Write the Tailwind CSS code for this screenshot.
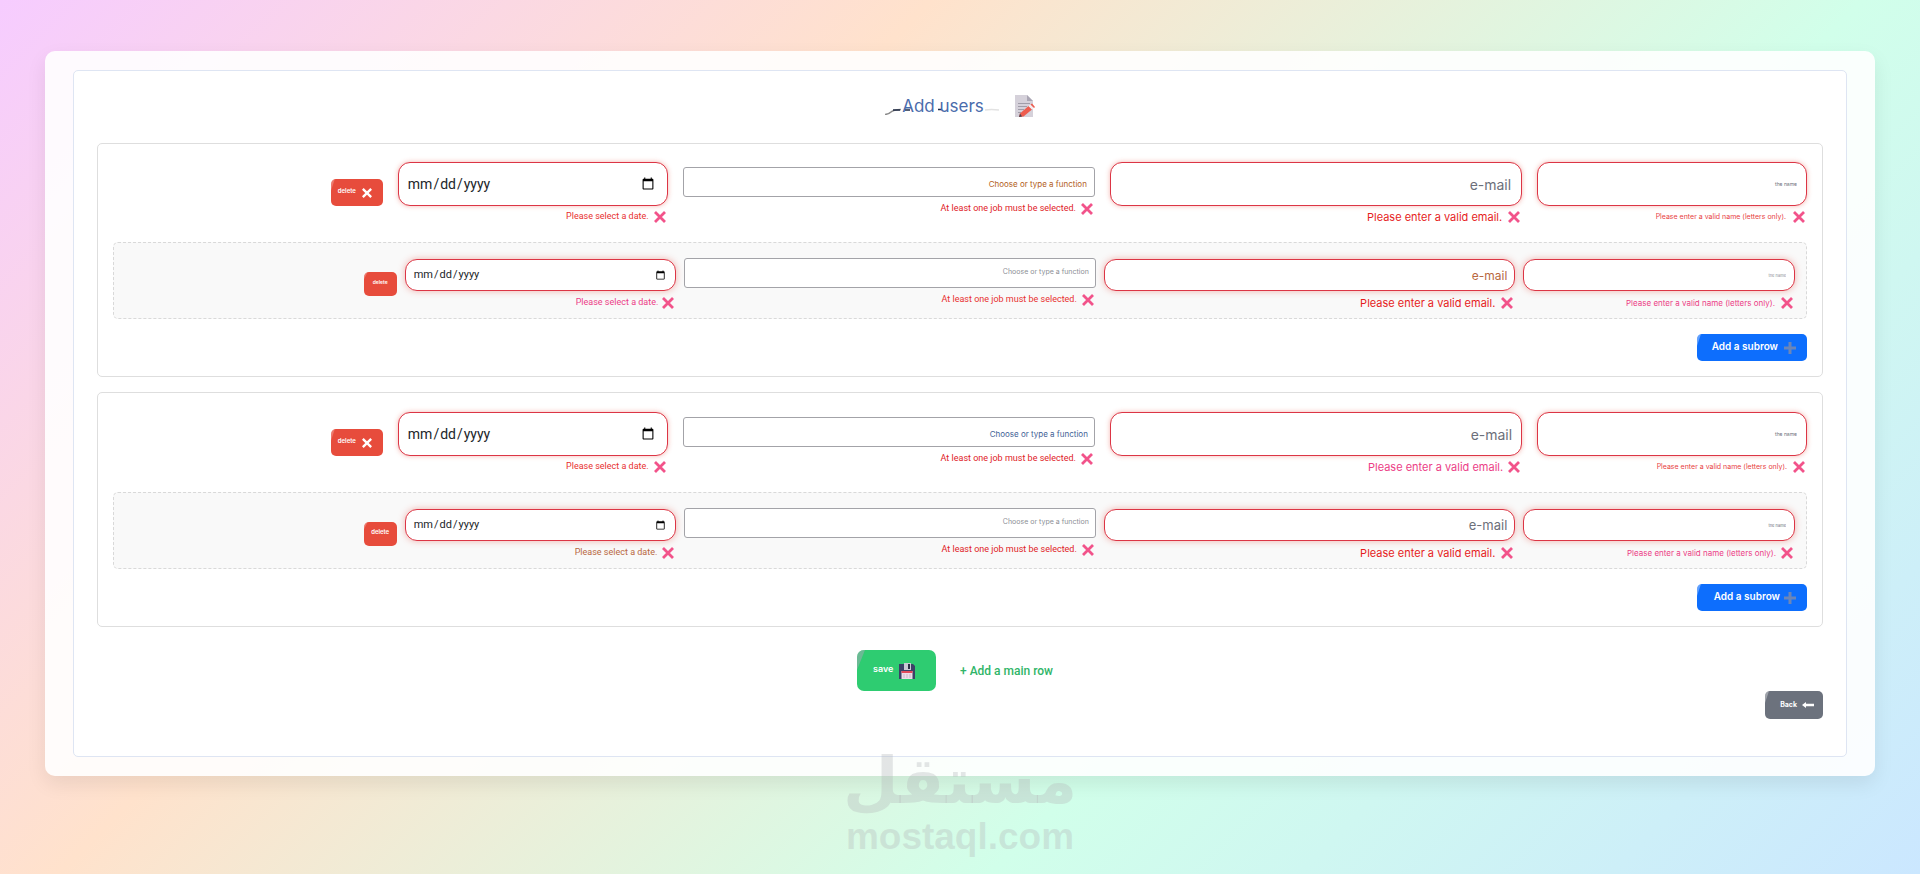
<!DOCTYPE html>
<html lang="en">
<head>
  <meta charset="UTF-8" />
  <meta name="viewport" content="width=device-width, initial-scale=1.0" />
  <title>Add users</title>
  <script src="https://cdn.jsdelivr.net/npm/@tailwindcss/browser@4"></script>
</head>
<body class="relative min-h-screen bg-[linear-gradient(135deg,#f6ccff,#ffe2cc,#d1ffea,#cbe7ff)] px-[45px] pt-[51px] pb-24 font-['Inter',sans-serif]">

  <!-- Shared icons -->
  <svg class="hidden">
    <symbol id="icon-cross" viewBox="0 0 12 12">
      <path d="M1 1 11 11M11 1 1 11" fill="none" stroke="currentColor" stroke-width="2.800" />
    </symbol>
    <symbol id="icon-plus" viewBox="0 0 12 12">
      <path d="M6 0v12M0 6h12" fill="none" stroke="currentColor" stroke-width="3" />
    </symbol>
  </svg>

  <main class="rounded-[10px] bg-white/90 px-7 py-[19px] shadow-[0_8px_20px_rgba(0,0,0,0.08)]">
    <form class="rounded-[5px] border border-[#dee5f3] bg-white px-[23px] pt-[23px] pb-[37px]">

      <header class="mb-[25px] flex h-6 items-center justify-center gap-[31px]">
        <h1 class="relative pl-[17px] text-[17px] leading-6 text-[#4a6cac]">
          <svg class="absolute top-[14px] left-0 h-[7px] w-[116px]" viewBox="0 0 116 7" fill="none">
            <path d="M0 6.500Q4 6 6 4T16 1.500" stroke="#8b8b8b" stroke-width="1.500" />
            <path d="M8 2h7M20 2h5M53 1.500h4" stroke="#1f2b45" stroke-width="1.500" />
            <path d="M100 2q6-1 14 0" stroke="#e2e2e2" stroke-width="1.500" />
          </svg>
          <span class="relative">Add users</span>
        </h1>
        <svg class="h-[22px] w-5" viewBox="0 0 20 22">
          <path d="M0 0h12l6 6v16H0z" fill="#d5d1da" />
          <path d="M12 0v6h6z" fill="#aaa6b4" />
          <path d="M3 8.500h12M3 11.500h9M3 14.500h6M3 17.500h3" stroke="#a19da9" />
          <path d="M5 18.500 13.500 11l3.500 3.500L8.500 21.500 4 22z" fill="#ee5c4e" />
          <path d="m13.500 11 2-1.500 3.500 3.500-2 1.500z" fill="#f4eef2" />
          <path d="m15.500 9.500 1.500-1 3 3.500-1 1z" fill="#ee5c4e" />
          <path d="m5 18.500-1 3.500 3-.5z" fill="#4c4250" />
        </svg>
      </header>

      <!-- Main row 1 -->
      <section class="mb-[15px] rounded-[5px] border border-[#dedede] px-[15px] pt-[18px] pb-[15px]">
        <div class="mb-[18px] grid grid-cols-12 items-start gap-[15px]">
          <div class="col-span-2 flex justify-end pt-[17px]">
            <button type="button" class="relative flex h-[27px] w-[52px] items-center gap-[6px] overflow-hidden rounded-[5px] bg-[#e74c3c] pl-[7px] text-white before:absolute before:top-0 before:left-0 before:h-3 before:w-1 before:bg-white/25 before:[clip-path:polygon(0_0,100%_0,0_100%)]">
              <span class="pb-1 text-[6px] leading-3 font-semibold">delete</span>
              <svg class="size-[10px]"><use href="#icon-cross" /></svg>
            </button>
          </div>
          <div class="col-span-2">
            <input type="date" aria-label="Date" class="block h-11 w-full rounded-xl border border-[#dc3545] bg-white pr-[10px] pl-2 font-['Roboto',sans-serif] text-[14px] text-[#212529] shadow-[0_0_5px_rgba(231,76,60,0.4)]" />
            <p class="mt-1 flex h-[14px] items-center justify-end gap-[5px] pr-[2px] font-['Roboto',sans-serif] text-[9px] text-[#e8302f]">Please select a date. <svg class="size-3 text-[#f2538a]"><use href="#icon-cross" /></svg></p>
          </div>
          <div class="col-span-3 pt-[5px]">
            <input type="text" aria-label="Function" placeholder="Choose or type a function" class="block h-[30px] w-full rounded-[3px] border border-[#a3a3a8] bg-white px-[7px] pt-1 text-right text-[8px] placeholder:text-[#b26022]" />
            <p class="mt-[5px] flex h-[14px] items-center justify-end gap-[5px] pr-[2px] font-['Roboto',sans-serif] text-[9px] text-[#e0221f]">At least one job must be selected. <svg class="size-3 text-[#f2538a]"><use href="#icon-cross" /></svg></p>
          </div>
          <div class="col-span-3">
            <input type="email" aria-label="E-mail" placeholder="e-mail" class="block h-11 w-full rounded-xl border border-[#dc3545] bg-white px-[10px] text-right text-[14px] shadow-[0_0_5px_rgba(231,76,60,0.4)] placeholder:text-[#6c6f7a]" />
            <p class="mt-1 flex h-[14px] items-center justify-end gap-[6px] pr-[2px] text-[11px] text-[#e61c1c]">Please enter a valid email. <svg class="size-3 text-[#f2538a]"><use href="#icon-cross" /></svg></p>
          </div>
          <div class="col-span-2">
            <input type="text" aria-label="Name" placeholder="the name" class="block h-11 w-full rounded-xl border border-[#dc3545] bg-white px-[9px] text-right text-[5px] shadow-[0_0_5px_rgba(231,76,60,0.4)] placeholder:text-[#6c6f7a]" />
            <p class="mt-1 flex h-[14px] items-center justify-end gap-[7px] pr-[2px] text-[7px] text-[#e8403f]">Please enter a valid name (letters only). <svg class="size-3 text-[#f2538a]"><use href="#icon-cross" /></svg></p>
          </div>
        </div>

        <div class="mb-[15px] grid grid-cols-12 items-start gap-2 rounded-[5px] border border-dashed border-[#d9d9d9] bg-[#f9f9f9] px-[11px] pt-[15px] pb-2">
          <div class="col-span-2 flex justify-end pt-[14px]">
            <button type="button" class="relative flex h-6 w-[33px] items-center justify-center overflow-hidden rounded-[5px] bg-[#e74c3c] text-white before:absolute before:top-0 before:left-0 before:h-2 before:w-1 before:bg-white/25 before:[clip-path:polygon(0_0,100%_0,0_100%)]">
              <span class="pb-1 text-[5px] leading-3 font-semibold">delete</span>
            </button>
          </div>
          <div class="col-span-2 pt-px">
            <input type="date" aria-label="Date" class="block h-8 w-full rounded-xl border border-[#dc3545] bg-white px-[7px] font-['Roboto',sans-serif] text-[11px] text-[#212529] shadow-[0_0_7px_rgba(231,76,60,0.4)]" />
            <p class="mt-[5px] flex h-[14px] items-center justify-end gap-1 pr-[2px] font-['Roboto',sans-serif] text-[9px] text-[#ec3d86]">Please select a date. <svg class="size-3 text-[#f2538a]"><use href="#icon-cross" /></svg></p>
          </div>
          <div class="col-span-3">
            <input type="text" aria-label="Function" placeholder="Choose or type a function" class="block h-[30px] w-full rounded-[3px] border border-[#a3a3a8] bg-white px-[6px] pb-1 text-right text-[7px] placeholder:text-[#8c8f96]" />
            <p class="mt-[5px] flex h-[14px] items-center justify-end gap-[5px] pr-[2px] font-['Roboto',sans-serif] text-[9px] text-[#e8302f]">At least one job must be selected. <svg class="size-3 text-[#f2538a]"><use href="#icon-cross" /></svg></p>
          </div>
          <div class="col-span-3 pt-px">
            <input type="email" aria-label="E-mail" placeholder="e-mail" class="block h-8 w-full rounded-xl border border-[#dc3545] bg-white px-[7px] text-right text-[12px] shadow-[0_0_7px_rgba(231,76,60,0.4)] placeholder:text-[#b8683f]" />
            <p class="mt-[5px] flex h-[14px] items-center justify-end gap-[6px] pr-[2px] text-[11px] text-[#e61c1c]">Please enter a valid email. <svg class="size-3 text-[#f2538a]"><use href="#icon-cross" /></svg></p>
          </div>
          <div class="col-span-2 pt-px">
            <input type="text" aria-label="Name" placeholder="the name" class="block h-8 w-full rounded-xl border border-[#dc3545] bg-white px-2 text-right text-[4px] shadow-[0_0_7px_rgba(231,76,60,0.4)] placeholder:text-[#8c8f96]" />
            <p class="mt-[5px] flex h-[14px] items-center justify-end gap-[6px] pr-[2px] text-[8px] text-[#ec3d86]">Please enter a valid name (letters only). <svg class="size-3 text-[#f2538a]"><use href="#icon-cross" /></svg></p>
          </div>
        </div>

        <div class="flex justify-end">
          <button type="button" class="relative flex h-[27px] w-[110px] items-center justify-end gap-[6px] overflow-hidden rounded-[5px] bg-[#0d6efd] pr-[11px] text-white before:absolute before:top-0 before:left-0 before:h-3 before:w-1 before:bg-white/35 before:[clip-path:polygon(0_0,100%_0,0_100%)]">
            <span class="pb-1 text-[10px] leading-3 font-semibold">Add a subrow</span>
            <svg class="size-3 text-[#6c86b8]"><use href="#icon-plus" /></svg>
          </button>
        </div>
      </section>

      <!-- Main row 2 -->
      <section class="mb-[23px] rounded-[5px] border border-[#dedede] px-[15px] pt-[19px] pb-[15px]">
        <div class="mb-[18px] grid grid-cols-12 items-start gap-[15px]">
          <div class="col-span-2 flex justify-end pt-[17px]">
            <button type="button" class="relative flex h-[27px] w-[52px] items-center gap-[6px] overflow-hidden rounded-[5px] bg-[#e74c3c] pl-[7px] text-white before:absolute before:top-0 before:left-0 before:h-3 before:w-1 before:bg-white/25 before:[clip-path:polygon(0_0,100%_0,0_100%)]">
              <span class="pb-1 text-[6px] leading-3 font-semibold">delete</span>
              <svg class="size-[10px]"><use href="#icon-cross" /></svg>
            </button>
          </div>
          <div class="col-span-2">
            <input type="date" aria-label="Date" class="block h-11 w-full rounded-xl border border-[#dc3545] bg-white pr-[10px] pl-2 font-['Roboto',sans-serif] text-[14px] text-[#212529] shadow-[0_0_5px_rgba(231,76,60,0.4)]" />
            <p class="mt-1 flex h-[14px] items-center justify-end gap-[5px] pr-[2px] font-['Roboto',sans-serif] text-[9px] text-[#e8302f]">Please select a date. <svg class="size-3 text-[#f2538a]"><use href="#icon-cross" /></svg></p>
          </div>
          <div class="col-span-3 pt-[5px]">
            <input type="text" aria-label="Function" placeholder="Choose or type a function" class="block h-[30px] w-full rounded-[3px] border border-[#a3a3a8] bg-white px-[6px] pt-1 text-right text-[8px] placeholder:text-[#3f5f96]" />
            <p class="mt-[5px] flex h-[14px] items-center justify-end gap-[5px] pr-[2px] font-['Roboto',sans-serif] text-[9px] text-[#e0221f]">At least one job must be selected. <svg class="size-3 text-[#f2538a]"><use href="#icon-cross" /></svg></p>
          </div>
          <div class="col-span-3">
            <input type="email" aria-label="E-mail" placeholder="e-mail" class="block h-11 w-full rounded-xl border border-[#dc3545] bg-white px-[9px] text-right text-[14px] shadow-[0_0_5px_rgba(231,76,60,0.4)] placeholder:text-[#6c6f7a]" />
            <p class="mt-1 flex h-[14px] items-center justify-end gap-[5px] pr-[2px] text-[11px] text-[#ec3d86]">Please enter a valid email. <svg class="size-3 text-[#f2538a]"><use href="#icon-cross" /></svg></p>
          </div>
          <div class="col-span-2">
            <input type="text" aria-label="Name" placeholder="the name" class="block h-11 w-full rounded-xl border border-[#dc3545] bg-white px-[9px] text-right text-[5px] shadow-[0_0_5px_rgba(231,76,60,0.4)] placeholder:text-[#6c6f7a]" />
            <p class="mt-1 flex h-[14px] items-center justify-end gap-[6px] pr-[2px] text-[7px] text-[#e8403f]">Please enter a valid name (letters only). <svg class="size-3 text-[#f2538a]"><use href="#icon-cross" /></svg></p>
          </div>
        </div>

        <div class="mb-[15px] grid grid-cols-12 items-start gap-2 rounded-[5px] border border-dashed border-[#d9d9d9] bg-[#f9f9f9] px-[11px] pt-[15px] pb-2">
          <div class="col-span-2 flex justify-end pt-[14px]">
            <button type="button" class="relative flex h-6 w-[33px] items-center justify-center overflow-hidden rounded-[5px] bg-[#e74c3c] text-white before:absolute before:top-0 before:left-0 before:h-2 before:w-1 before:bg-white/25 before:[clip-path:polygon(0_0,100%_0,0_100%)]">
              <span class="pb-1 text-[6px] leading-3 font-semibold">delete</span>
            </button>
          </div>
          <div class="col-span-2 pt-px">
            <input type="date" aria-label="Date" class="block h-8 w-full rounded-xl border border-[#dc3545] bg-white px-[7px] font-['Roboto',sans-serif] text-[11px] text-[#212529] shadow-[0_0_7px_rgba(231,76,60,0.4)]" />
            <p class="mt-[5px] flex h-[14px] items-center justify-end gap-[5px] pr-[2px] font-['Roboto',sans-serif] text-[9px] text-[#b8683f]">Please select a date. <svg class="size-3 text-[#f2538a]"><use href="#icon-cross" /></svg></p>
          </div>
          <div class="col-span-3">
            <input type="text" aria-label="Function" placeholder="Choose or type a function" class="block h-[30px] w-full rounded-[3px] border border-[#a3a3a8] bg-white px-[6px] pb-1 text-right text-[7px] placeholder:text-[#8c8f96]" />
            <p class="mt-[5px] flex h-[14px] items-center justify-end gap-[5px] pr-[2px] font-['Roboto',sans-serif] text-[9px] text-[#e0221f]">At least one job must be selected. <svg class="size-3 text-[#f2538a]"><use href="#icon-cross" /></svg></p>
          </div>
          <div class="col-span-3 pt-px">
            <input type="email" aria-label="E-mail" placeholder="e-mail" class="block h-8 w-full rounded-xl border border-[#dc3545] bg-white px-[7px] text-right text-[13px] shadow-[0_0_7px_rgba(231,76,60,0.4)] placeholder:text-[#6c6f7a]" />
            <p class="mt-[5px] flex h-[14px] items-center justify-end gap-[6px] pr-[2px] text-[11px] text-[#e61c1c]">Please enter a valid email. <svg class="size-3 text-[#f2538a]"><use href="#icon-cross" /></svg></p>
          </div>
          <div class="col-span-2 pt-px">
            <input type="text" aria-label="Name" placeholder="the name" class="block h-8 w-full rounded-xl border border-[#dc3545] bg-white px-2 text-right text-[4px] shadow-[0_0_7px_rgba(231,76,60,0.4)] placeholder:text-[#6c6f7a]" />
            <p class="mt-[5px] flex h-[14px] items-center justify-end gap-[5px] pr-[2px] text-[8px] text-[#ec3d86]">Please enter a valid name (letters only). <svg class="size-3 text-[#f2538a]"><use href="#icon-cross" /></svg></p>
          </div>
        </div>

        <div class="flex justify-end">
          <button type="button" class="relative flex h-[27px] w-[110px] items-center justify-end gap-1 overflow-hidden rounded-[5px] bg-[#0d6efd] pr-[11px] text-white before:absolute before:top-0 before:left-0 before:h-3 before:w-1 before:bg-white/35 before:[clip-path:polygon(0_0,100%_0,0_100%)]">
            <span class="pb-1 text-[10px] leading-3 font-semibold">Add a subrow</span>
            <svg class="size-3 text-[#6c86b8]"><use href="#icon-plus" /></svg>
          </button>
        </div>
      </section>

      <div class="flex items-center justify-center gap-[14px]">
        <button type="submit" class="relative flex h-[41px] w-[79px] items-center gap-[6px] overflow-hidden rounded-[7px] bg-[#2ecc71] pl-4 text-white before:absolute before:top-0 before:left-0 before:h-5 before:w-2 before:bg-[#a8a8b8]/50 before:[clip-path:polygon(0_0,100%_0,0_100%)]">
          <span class="pb-1 text-[9px] leading-3 font-semibold">save</span>
          <svg class="size-4" viewBox="0 0 16 16">
            <path d="M0 1h14l2 2v13H0z" fill="#3a4167" />
            <path d="M5 0h7v7H5z" fill="#c9c9d4" />
            <path d="M9 1h2v5H9z" fill="#2d3046" />
            <path d="M2.500 8h11v8h-11z" fill="#eddbe8" />
            <path d="M2.500 8h11v2h-11z" fill="#e24a5c" />
            <path d="M4.500 12h1m2 0h1m2 0h1M4.500 14h1m2 0h1m2 0h1" stroke="#b58fae" />
          </svg>
        </button>
        <button type="button" class="h-[41px] px-[10px] font-['Roboto',sans-serif] text-[12px] font-medium text-[#30b568]">+ Add a main row</button>
      </div>

      <div class="flex justify-end">
        <a href="#" class="relative flex h-7 w-[58px] items-center justify-end gap-[5px] overflow-hidden rounded-[5px] bg-[#6c727d] pr-[9px] text-white before:absolute before:top-0 before:left-0 before:h-3 before:w-1 before:bg-white/35 before:[clip-path:polygon(0_0,100%_0,0_100%)]">
          <span class="text-[7px] leading-3 font-bold">Back</span>
          <svg class="h-[6px] w-3" viewBox="0 0 12 6">
            <path d="M0 3 4 0v1.700h8v2.600H4V6z" fill="currentColor" />
          </svg>
        </a>
      </div>
    </form>
  </main>

  <!-- Watermark -->
  <div class="pointer-events-none absolute inset-x-0 top-[745px] flex flex-col items-center gap-1 font-bold text-[#b4b8ba]/35">
    <span lang="ar" dir="rtl" class="font-['DejaVu_Sans',sans-serif] text-[64px] leading-[72px]">مستقل</span>
    <span class="font-['Liberation_Sans',sans-serif] text-[37px] leading-8">mostaql.com</span>
  </div>
</body>
</html>
